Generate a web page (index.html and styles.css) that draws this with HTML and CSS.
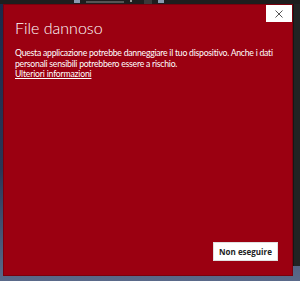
FILE: index.html
```html
<!DOCTYPE html>
<html lang="it">
<head>
    <meta charset="UTF-8">
    <title>File dannoso</title>
    <link rel="stylesheet" href="styles.css">
</head>
<body>
    <div class="taskbar">
        <span class="task-icon"></span>
        <span class="task-block"></span>
        <span class="task-dot"></span>
        <span class="task-dark"></span>
        <span class="task-icon"></span>
    </div>
    <div class="desktop">
        <div class="dialog">
            <div class="dialog-head">
                <h1>File dannoso</h1>
                <button class="close-btn" aria-label="Chiudi">
                    <svg width="8" height="8" viewBox="0 0 8 8"><path d="M0.5 0.5 L7.5 7.5 M7.5 0.5 L0.5 7.5" stroke="#555" stroke-width="1" fill="none"/></svg>
                </button>
            </div>
            <p class="message">Questa applicazione potrebbe danneggiare il tuo dispositivo. Anche i dati personali sensibili potrebbero essere a rischio.</p>
            <a href="#" class="more-link">Ulteriori informazioni</a>
            <div class="actions">
                <button class="run-btn">Non eseguire</button>
            </div>
        </div>
        <div class="side-strip"></div>
    </div>
</body>
</html>
```

FILE: styles.css
```css
body {
    margin: 0;
    width: 300px;
    height: 281px;
    overflow: hidden;
    background: linear-gradient(180deg, #1b2a4a 0%, #2a3656 60%, #5a6a8a 100%);
    font-family: 'Lato', 'Open Sans', sans-serif;
}
.taskbar {
    height: 4px;
    background: #1e1e1e;
    display: flex;
    align-items: flex-start;
    padding-left: 74px;
    gap: 6px;
    overflow: hidden;
}
.task-icon {
    width: 6px;
    height: 3px;
    background: #8a9ab0;
}
.task-block {
    width: 38px;
    height: 2px;
    margin-top: 1px;
    background: #555;
}
.task-dot {
    width: 2px;
    height: 2px;
    background: #999;
}
.task-dark {
    width: 8px;
    height: 4px;
    background: #3a3a3a;
    margin-left: 6px;
}
.desktop {
    display: flex;
    padding-left: 3px;
    height: 277px;
}
.dialog {
    width: 288px;
    height: 270px;
    background: #9b0011;
    border: 1px solid #7a000c;
    display: flex;
    flex-direction: column;
    color: #fff;
}
.side-strip {
    flex: 1;
    height: 262px;
    background: #212323;
    border-left: 1px solid #161616;
}
.dialog-head {
    display: flex;
    justify-content: space-between;
    align-items: flex-start;
}
h1 {
    margin: 13px 0 0 11px;
    font-size: 16px;
    font-weight: 300;
    line-height: 20px;
}
.close-btn {
    width: 26px;
    height: 17px;
    background: #fff;
    border: none;
    padding: 0;
    display: flex;
    align-items: center;
    justify-content: center;
    cursor: pointer;
}
.message {
    margin: 10px 10px 0 11px;
    font-size: 8.7px;
    line-height: 10.5px;
    letter-spacing: -0.25px;
}
.more-link {
    margin: 0 0 0 11px;
    font-size: 8.7px;
    line-height: 10.5px;
    letter-spacing: -0.2px;
    color: #fff;
    text-decoration: underline;
    align-self: flex-start;
}
.actions {
    margin-top: auto;
    display: flex;
    justify-content: flex-end;
    padding: 0 14px 14px 0;
}
.run-btn {
    width: 65px;
    height: 19px;
    background: #fff;
    border: 1px solid #e0e0e0;
    color: #222;
    font-family: 'Open Sans', 'Noto Sans', sans-serif;
    font-weight: 700;
    font-size: 8px;
    padding: 0;
    cursor: pointer;
}
```
